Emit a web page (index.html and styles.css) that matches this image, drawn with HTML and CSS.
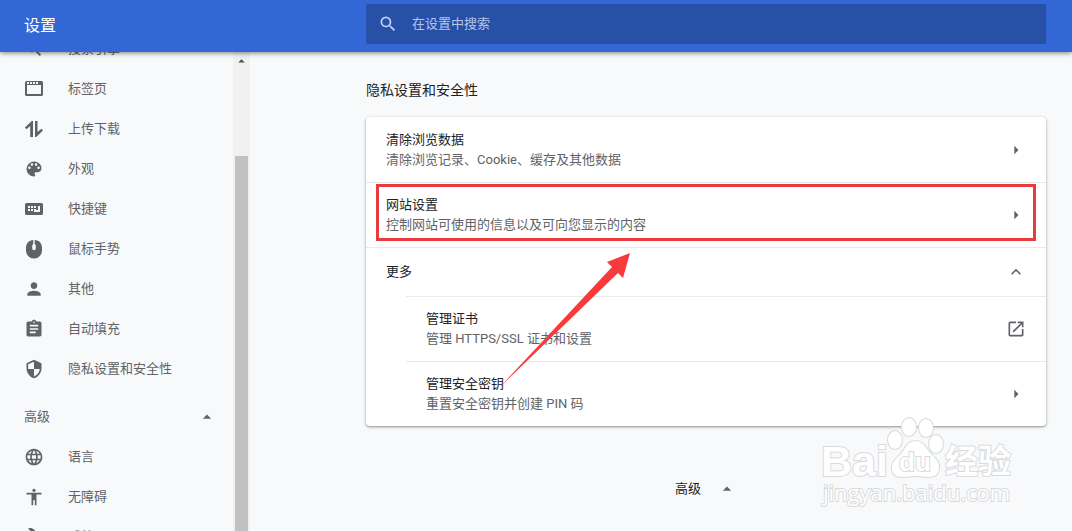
FILE: index.html
```html
<!DOCTYPE html>
<html lang="zh-CN">
<head>
  <meta charset="UTF-8">
  <meta name="viewport" content="width=device-width, initial-scale=1">
  <title>设置</title>
  <link rel="stylesheet" href="styles.css">
</head>
<body>
  <header class="toolbar">
    <h1>设置</h1>
    <label class="search">
      <svg class="icon" viewBox="0 0 24 24"><path d="M15.5 14h-.79l-.28-.27A6.471 6.471 0 0 0 16 9.5 6.5 6.5 0 1 0 9.5 16c1.61 0 3.09-.59 4.23-1.57l.27.28v.79l5 4.99L20.49 19l-4.99-5zm-6 0C7.01 14 5 11.99 5 9.5S7.01 5 9.5 5 14 7.01 14 9.5 11.99 14 9.5 14z"/></svg>
      <input type="search" placeholder="在设置中搜索" aria-label="在设置中搜索">
    </label>
  </header>

  <div class="page">
    <div class="sidebar">
      <nav class="menu">
        <a href="#search">
          <svg class="icon" viewBox="0 0 24 24"><path d="M15.5 14h-.79l-.28-.27A6.471 6.471 0 0 0 16 9.5 6.5 6.5 0 1 0 9.5 16c1.61 0 3.09-.59 4.23-1.57l.27.28v.79l5 4.99L20.49 19l-4.99-5zm-6 0C7.01 14 5 11.99 5 9.5S7.01 5 9.5 5 14 7.01 14 9.5 11.99 14 9.5 14z"/></svg>
          搜索引擎
        </a>
        <a href="#tabs">
          <svg class="icon" viewBox="0 0 20 20"><path fill-rule="evenodd" d="M2.500 2h15A1.500 1.500 0 0 1 19 3.500v12a1.500 1.500 0 0 1-1.500 1.500h-15A1.500 1.500 0 0 1 1 15.500v-12A1.500 1.500 0 0 1 2.500 2zM3 6v9h14V6zM3 3v2h2V3zm3 0v2h2V3zm3 0v2h2V3zm3 0v2h2V3z"/></svg>
          标签页
        </a>
        <a href="#downloads">
          <svg class="icon" viewBox="0 0 20 20"><path d="M9 18H6.200V7L2.500 10.200.900 8.600 7.800 2H9zM11 2h2.500v11l3.900-3.200L19 11.400 12.200 18H11z"/></svg>
          上传下载
        </a>
        <a href="#appearance">
          <svg class="icon" viewBox="0 0 24 24"><path d="M12 3a9 9 0 0 0 0 18c.83 0 1.500-.67 1.500-1.500 0-.39-.15-.74-.39-1.010-.23-.26-.38-.61-.38-.99 0-.83.67-1.500 1.500-1.500H16c2.760 0 5-2.240 5-5 0-4.420-4.030-8-9-8zm-5.500 9c-.83 0-1.500-.67-1.500-1.500S5.670 9 6.500 9 8 9.670 8 10.500 7.330 12 6.500 12zm3-4C8.670 8 8 7.330 8 6.500S8.670 5 9.500 5s1.500.67 1.500 1.500S10.330 8 9.500 8zm5 0c-.83 0-1.500-.67-1.500-1.500S13.670 5 14.500 5s1.500.67 1.500 1.500S15.330 8 14.500 8zm3 4c-.83 0-1.500-.67-1.500-1.500S16.670 9 17.500 9s1.500.67 1.500 1.500-.67 1.500-1.500 1.500z"/></svg>
          外观
        </a>
        <a href="#keys">
          <svg class="icon" viewBox="0 0 20 20"><path fill-rule="evenodd" d="M2.500 4h15A1.500 1.500 0 0 1 19 5.500v9a1.500 1.500 0 0 1-1.500 1.500h-15A1.500 1.500 0 0 1 1 14.500v-9A1.500 1.500 0 0 1 2.500 4zM4 7v2h2V7zm3 0v2h2V7zm3 0v2h2V7zm-6 3v2h2v-2zm3 0v2h2v-2zm3 0v3h6V7h-2v4h-2v-1z"/></svg>
          快捷键
        </a>
        <a href="#mouse">
          <svg class="icon" viewBox="0 0 20 20"><path fill-rule="evenodd" d="M9.300 1v4.200a1.700 1.700 0 0 0-1.100 1.600v2.600a1.800 1.800 0 0 0 3.600 0V6.800a1.700 1.700 0 0 0-1.100-1.600V1C15 1.200 18 4.200 18 9v2c0 5-3.200 8.500-8 8.500S2 16 2 11V9c0-4.800 3-7.800 7.300-8z"/></svg>
          鼠标手势
        </a>
        <a href="#other">
          <svg class="icon" viewBox="0 0 24 24"><path d="M12 12c2.210 0 4-1.790 4-4s-1.790-4-4-4-4 1.790-4 4 1.790 4 4 4zm0 2c-2.670 0-8 1.340-8 4v2h16v-2c0-2.660-5.330-4-8-4z"/></svg>
          其他
        </a>
        <a href="#autofill">
          <svg class="icon" viewBox="0 0 24 24"><path d="M19 3h-4.180C14.400 1.840 13.300 1 12 1s-2.400.84-2.820 2H5c-1.100 0-2 .9-2 2v14c0 1.100.9 2 2 2h14c1.100 0 2-.9 2-2V5c0-1.100-.9-2-2-2zm-7 0c.55 0 1 .45 1 1s-.45 1-1 1-1-.45-1-1 .45-1 1-1zm2 14H7v-2h7v2zm3-4H7v-2h10v2zm0-4H7V7h10v2z"/></svg>
          自动填充
        </a>
        <a href="#privacy">
          <svg class="icon" viewBox="0 0 24 24"><path d="M12 1 3 5v6c0 5.550 3.840 10.740 9 12 5.160-1.260 9-6.450 9-12V5l-9-4zm0 10.990h7c-.53 4.120-3.280 7.790-7 8.940V12H5V6.300l7-3.110v8.800z"/></svg>
          隐私设置和安全性
        </a>
        <button class="advanced-toggle" type="button">
          高级
          <svg class="icon" viewBox="0 0 24 24"><path d="m7 14 5-5 5 5z"/></svg>
        </button>
        <a href="#languages">
          <svg class="icon" viewBox="0 0 24 24"><path d="M11.990 2C6.470 2 2 6.480 2 12s4.470 10 9.990 10C17.520 22 22 17.520 22 12S17.520 2 11.990 2zm6.930 6h-2.950a15.650 15.650 0 0 0-1.380-3.560A8.030 8.030 0 0 1 18.920 8zM12 4.040c.83 1.200 1.480 2.530 1.910 3.960h-3.820c.43-1.430 1.080-2.760 1.910-3.960zM4.260 14C4.100 13.360 4 12.690 4 12s.1-1.360.26-2h3.380c-.08.66-.14 1.320-.14 2s.06 1.340.14 2H4.260zm.82 2h2.950c.32 1.250.78 2.450 1.380 3.560A7.987 7.987 0 0 1 5.080 16zm2.950-8H5.080a7.987 7.987 0 0 1 4.330-3.560A15.650 15.650 0 0 0 8.030 8zM12 19.960c-.83-1.200-1.480-2.530-1.910-3.960h3.820c-.43 1.430-1.080 2.760-1.910 3.960zM14.340 14H9.660c-.09-.66-.16-1.320-.16-2s.07-1.350.16-2h4.680c.09.65.16 1.320.16 2s-.07 1.340-.16 2zm.25 5.560c.6-1.110 1.060-2.310 1.380-3.560h2.950a8.030 8.030 0 0 1-4.330 3.560zM16.360 14c.08-.66.14-1.320.14-2s-.06-1.340-.14-2h3.380c.16.64.26 1.310.26 2s-.1 1.360-.26 2h-3.380z"/></svg>
          语言
        </a>
        <a href="#accessibility">
          <svg class="icon" viewBox="0 0 24 24"><path d="M12 2c1.100 0 2 .9 2 2s-.9 2-2 2-2-.9-2-2 .9-2 2-2zm9 7h-6v13h-2v-6h-2v6H9V9H3V7h18v2z"/></svg>
          无障碍
        </a>
        <a href="#system">
          <svg class="icon" viewBox="0 0 24 24"><path d="m22.700 19-9.100-9.100c.9-2.300.4-5-1.500-6.900-2-2-5-2.400-7.400-1.300L9 6 6 9 1.600 4.700C.4 7.100.9 10.100 2.900 12.100c1.900 1.900 4.600 2.400 6.900 1.500l9.100 9.100c.4.4 1 .4 1.400 0l2.300-2.300c.5-.4.5-1.100.1-1.400z"/></svg>
          系统
        </a>
      </nav>
      <div class="scrollbar">
        <svg viewBox="0 0 16 16"><path d="m4 11 4-4 4 4z"/></svg>
        <div class="thumb"></div>
      </div>
    </div>

    <main class="content">
      <h2>隐私设置和安全性</h2>
      <section class="card">
        <button class="row" type="button">
          <span class="text">清除浏览数据<small>清除浏览记录、Cookie、缓存及其他数据</small></span>
          <svg class="icon" viewBox="0 0 24 24"><path d="m10 17 5-5-5-5z"/></svg>
        </button>
        <button class="row marked" type="button">
          <span class="text">网站设置<small>控制网站可使用的信息以及可向您显示的内容</small></span>
          <svg class="icon" viewBox="0 0 24 24"><path d="m10 17 5-5-5-5z"/></svg>
        </button>
        <button class="row more" type="button">
          <span class="text">更多</span>
          <svg class="icon" viewBox="0 0 24 24"><path d="m12 8-6 6 1.410 1.410L12 10.830l4.590 4.580L18 14z"/></svg>
        </button>
        <button class="row sub" type="button">
          <span class="text">管理证书<small>管理 HTTPS/SSL 证书和设置</small></span>
          <svg class="icon" viewBox="0 0 24 24"><path d="M19 19H5V5h7V3H5a2 2 0 0 0-2 2v14a2 2 0 0 0 2 2h14c1.100 0 2-.9 2-2v-7h-2v7zM14 3v2h3.590l-9.830 9.830 1.410 1.410L19 6.410V10h2V3h-7z"/></svg>
        </button>
        <button class="row sub" type="button">
          <span class="text">管理安全密钥<small>重置安全密钥并创建 PIN 码</small></span>
          <svg class="icon" viewBox="0 0 24 24"><path d="m10 17 5-5-5-5z"/></svg>
        </button>
        <svg class="arrow" viewBox="0 0 132 136"><path d="M131 0 108 9l5 5L0 135 119 20l5 5z"/></svg>
      </section>
      <button class="advanced" type="button">
        高级
        <svg class="icon" viewBox="0 0 24 24"><path d="m7 14 5-5 5 5z"/></svg>
      </button>
    </main>
  </div>

  <svg class="watermark" viewBox="0 0 200 96">
    <text class="brand" x="1" y="58">Bai</text>
    <ellipse cx="75" cy="22" rx="7" ry="9"/>
    <ellipse cx="89" cy="9" rx="7" ry="9"/>
    <ellipse cx="106" cy="10" rx="7" ry="9"/>
    <ellipse cx="116" cy="26" rx="7" ry="9"/>
    <path d="M95 23c9 0 11 8 17 14 6 5 8 10 7 14-1 6-5 8-10 8-6 0-9-1-14-1s-8 1-13 1c-6 0-10-3-10-9 0-5 3-9 8-13 5-5 7-14 15-14z"/>
    <text class="du" x="79" y="53">du</text>
    <text class="cjk" x="125" y="55">经验</text>
    <text class="site" x="3" y="83">jingyan.baidu.com</text>
  </svg>
</body>
</html>
```
FILE: styles.css
```css
* {
  box-sizing: border-box;
}

body {
  margin: 0;
  height: 100vh;
  display: flex;
  flex-direction: column;
  overflow: hidden;
  position: relative;
  background-color: #f8f9fa;
  color: #202124;
  font-family: Roboto, "Noto Sans CJK SC", sans-serif;
  font-size: 13px;
  line-height: 20px;
}

button, input {
  border: none;
  background: none;
  padding: 0;
  font: inherit;
  color: inherit;
  text-align: left;
}

button {
  cursor: pointer;
}

.icon {
  width: 20px;
  height: 20px;
  flex: none;
  fill: #5f6368;
}

/* top bar */
.toolbar {
  display: flex;
  flex: none;
  height: 52px;
  padding: 4px 26px 8px 24px;
  background-color: #3367d6;
  color: #fff;
  box-shadow: 0 1px 5px rgba(0, 0, 0, 0.5);
  z-index: 1;
}

.toolbar h1 {
  width: 342px;
  margin: 0;
  padding-top: 12px;
  font-size: 16px;
  font-weight: 400;
  line-height: 20px;
}

.search {
  flex: 1;
  display: flex;
  align-items: center;
  gap: 14px;
  padding: 0 12px;
  border-radius: 2px;
  background-color: #2850a7;
}

.search .icon {
  fill: #c2d1f2;
}

.search input {
  flex: 1;
  outline: none;
}

.search input::placeholder {
  color: #b5c6ec;
}

.page {
  flex: 1;
  display: flex;
  min-height: 0;
}

/* left menu */
.sidebar {
  width: 250px;
  display: flex;
  overflow: hidden;
}

.menu {
  flex: 1;
  margin-top: -23px;
  color: #5f6368;
}

.menu a {
  display: flex;
  align-items: center;
  gap: 24px;
  height: 40px;
  padding-left: 24px;
  color: inherit;
  text-decoration: none;
}

.advanced-toggle {
  display: flex;
  align-items: center;
  justify-content: space-between;
  width: 100%;
  height: 40px;
  margin-top: 8px;
  padding: 0 16px 0 24px;
}

.scrollbar {
  display: flex;
  flex-direction: column;
  width: 17px;
  padding: 0 2px;
  background-color: #f1f1f1;
}

.scrollbar svg {
  height: 16px;
  fill: #505050;
}

.thumb {
  flex: 1;
  margin-top: 88px;
  background-color: #c1c1c1;
}

/* settings */
.content {
  flex: 1;
  padding: 28px 26px 0 116px;
}

.content h2 {
  margin: 0 0 17px;
  font-size: 14px;
  font-weight: 400;
  line-height: 20px;
}

.card {
  position: relative;
  display: flex;
  flex-direction: column;
  border-radius: 4px;
  background-color: #fff;
  box-shadow: 0 1px 2px rgba(60, 64, 67, 0.4), 0 1px 3px 1px rgba(60, 64, 67, 0.15);
}

.row {
  position: relative;
  display: flex;
  align-items: center;
  justify-content: space-between;
  height: 65px;
  padding: 0 20px;
}

.row + .row {
  border-top: 1px solid #e8eaed;
}

.row small {
  display: block;
  font-size: 13px;
  color: #5f6368;
}

.more {
  height: 49px;
}

.sub {
  margin-left: 40px;
}

.marked::after {
  content: "";
  position: absolute;
  inset: 1px 10px 6px;
  border: 3px solid #e93a3d;
}

.arrow {
  position: absolute;
  left: 133px;
  top: 136px;
  width: 132px;
  height: 136px;
  fill: #fa3a3a;
  pointer-events: none;
}

.advanced {
  display: flex;
  align-items: center;
  gap: 16px;
  margin: 53px auto 0;
}

/* watermark */
.watermark {
  position: absolute;
  right: 52px;
  bottom: 17px;
  width: 200px;
  height: 96px;
  overflow: visible;
  fill: #fff;
  stroke: #d8dadc;
  stroke-width: 2px;
  paint-order: stroke;
  pointer-events: none;
}

.brand {
  font: bold 43px "Liberation Sans", sans-serif;
}

.du {
  font: bold 26px "Liberation Sans", sans-serif;
}

.cjk {
  font: bold 33px "Noto Sans CJK SC", sans-serif;
}

.site {
  font: 22px "Open Sans", sans-serif;
}
```
